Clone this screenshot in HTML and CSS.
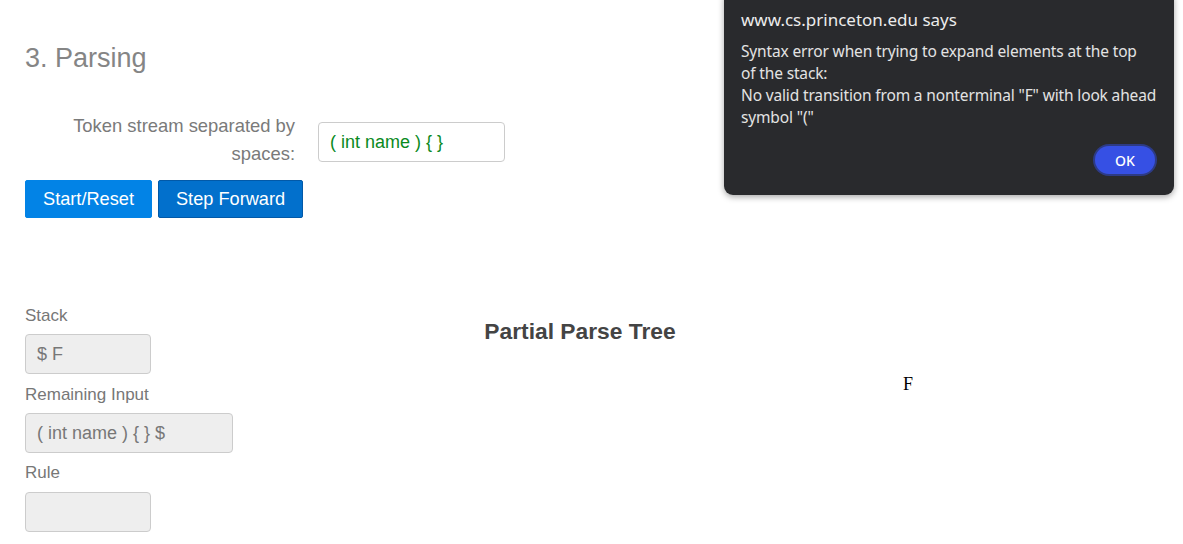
FILE: index.html
```html
<!DOCTYPE html>
<html>
<head>
<meta charset="utf-8">
<link rel="stylesheet" href="styles.css">
</head>
<body>
<div class="page">
  <h2 class="title">3. Parsing</h2>
  <div class="token-row">
    <label class="token-label">Token stream separated by spaces:</label>
    <div class="token-input">( int name ) { }</div>
  </div>
  <div class="buttons">
    <button class="btn">Start/Reset</button>
    <button class="btn btn-active">Step Forward</button>
  </div>
  <div class="lower">
    <div class="state">
      <div class="field-label">Stack</div>
      <div class="field small first">$ F</div>
      <div class="field-label">Remaining Input</div>
      <div class="field wide">( int name ) { } $</div>
      <div class="field-label rule-label">Rule</div>
      <div class="field small"></div>
    </div>
    <div class="tree">
      <h3 class="tree-title">Partial Parse Tree</h3>
      <div class="tree-canvas"><span class="node">F</span></div>
    </div>
  </div>
</div>
<div class="dialog">
  <div class="dialog-head">www.cs.princeton.edu says</div>
  <div class="dialog-msg">Syntax error when trying to expand elements at the top<br>of the stack:<br>No valid transition from a nonterminal "F" with look ahead symbol "("</div>
  <div class="dialog-actions"><button class="ok">OK</button></div>
</div>
</body>
</html>
```
FILE: styles.css
```css
html, body { margin: 0; padding: 0; background: #fff; }
body { font-family: "Liberation Sans", Arial, sans-serif; color: #777; }
.page { padding: 0 25px; }
.title { margin: 0; padding-top: 42px; font-size: 27px; font-weight: normal; line-height: 32px; color: #858585; height: 70px; }
.token-row { display: flex; align-items: flex-start; }
.token-label { width: 270px; text-align: right; font-size: 18.4px; line-height: 28px; color: #7a7a7a; }
.token-input { margin-left: 23px; margin-top: 10px; width: 163px; height: 38px; border: 1px solid #ccc; border-radius: 4px; padding: 0 11px; font-size: 18px; line-height: 38px; color: #0a8a1e; }
.buttons { display: flex; gap: 6px; margin-top: 12px; }
.btn { font-family: "Liberation Sans", Arial, sans-serif; font-size: 18.2px; color: #fff; background: #0283e6; border: 1px solid #0283e6; border-radius: 2px; height: 38px; padding: 0 17px; }
.btn-active { background: #0270cc; border-color: #0259a8; }
.lower { display: flex; margin-top: 87px; }
.state { width: 300px; }
.field-label { font-size: 17px; line-height: 22px; color: #777; margin-bottom: 7px; }
.rule-label { margin-bottom: 8px; }
.field { height: 38px; border: 1px solid #ccc; border-radius: 4px; background: #eee; font-size: 18px; line-height: 38px; padding: 0 11px; color: #777; margin-bottom: 9px; box-sizing: content-box; }
.field.first { margin-bottom: 10px; }
.small { width: 102px; }
.wide { width: 184px; }
.tree { flex: 1; position: relative; }
.tree-title { margin: 0; padding-top: 13px; width: 510px; text-align: center; font-size: 22.8px; line-height: 26px; color: #444; font-weight: bold; }
.tree-canvas { height: 150px; position: relative; }
.node { position: absolute; left: 578px; top: 30px; font-family: "Liberation Serif", "Times New Roman", serif; font-size: 18px; color: #000; }
.dialog { position: absolute; left: 724px; top: -10px; width: 450px; height: 205px; background: #292a2d; border-radius: 9px; box-shadow: 0 2px 6px rgba(0,0,0,0.35); color: #e8e8e8; font-family: "Noto Sans", "Open Sans", sans-serif; box-sizing: border-box; padding: 17px 10px 0 17px; }
.dialog-head { font-size: 17px; line-height: 24px; margin-top: 1px; color: #ececec; }
.dialog-msg { margin-top: 8px; font-size: 15.5px; line-height: 22px; color: #e3e3e3; letter-spacing: -0.15px; }
.dialog-actions { display: flex; justify-content: flex-end; margin-top: 18px; margin-right: 7px; }
.ok { width: 60px; height: 28px; border-radius: 14px; background: #3650e4; color: #fff; border: none; font-family: "Noto Sans", sans-serif; font-size: 14px; font-weight: 500; box-shadow: 0 0 0 2px #2d3b85; margin-right: 2px; }
```
